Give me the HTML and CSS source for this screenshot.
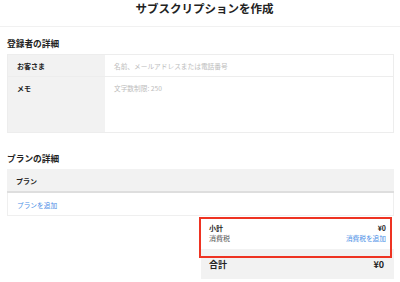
FILE: index.html
```html
<!DOCTYPE html>
<html>
  <head>
    <link rel="stylesheet" href="styles.css">
  </head>
  <body>
    <div class="top">
      <h1 class="title">サブスクリプションを作成</h1>
    </div>
    <div class="page">
      <h4 class="section">登録者の詳細</h4>
      <div class="details">
        <div class="row row-short">
          <div class="label">お客さま</div>
          <div class="value">名前、メールアドレスまたは電話番号</div>
        </div>
        <div class="row row-tall">
          <div class="label">メモ</div>
          <div class="value">文字数制限: 250</div>
        </div>
      </div>

      <h4 class="section section-gap">プランの詳細</h4>
      <div class="plans">
        <div class="plans-head">プラン</div>
        <div class="plans-row"><a href="#" class="link">プランを追加</a></div>
      </div>

      <div class="summary">
        <div class="summary-lines">
          <div class="line strong"><span>小計</span><span>¥0</span></div>
          <div class="line muted"><span>消費税</span><a href="#" class="link">消費税を追加</a></div>
        </div>
        <div class="total"><span>合計</span><span>¥0</span></div>
        <div class="highlight"></div>
      </div>
    </div>
  </body>
</html>
```

FILE: styles.css
```css
* {
  margin: 0;
  padding: 0;
  box-sizing: border-box;
}

body {
  font-family: "Noto Sans CJK JP", "Noto Sans", sans-serif;
  color: #222;
  background: #fff;
  width: 400px;
  overflow: hidden;
}

.top {
  height: 27px;
  border-bottom: 1px solid #f1f1f1;
}

.title {
  font-size: 11.5px;
  font-weight: bold;
  line-height: 17px;
  text-align: center;
  padding-left: 9px;
}

.page {
  padding: 0 6px 0 7px;
}

.section {
  font-size: 8.7px;
  font-weight: bold;
  line-height: 12px;
  padding: 11px 0 4px;
}

.section-gap {
  padding: 20px 0 4px;
}

.details {
  border: 1px solid #ededed;
}

.row {
  display: flex;
}

.row-short {
  height: 22px;
  border-bottom: 1px solid #ededed;
}

.row-tall {
  height: 55px;
}

.label {
  width: 97px;
  background: #f2f2f2;
  font-size: 7px;
  font-weight: bold;
  padding: 7px 0 0 9px;
  line-height: 9px;
}

.value {
  flex: 1;
  font-size: 6.7px;
  color: #bdbdbd;
  padding: 7px 0 0 9px;
  line-height: 9px;
}

.plans-head {
  height: 24px;
  background: #f2f2f2;
  border-bottom: 2px solid #dedede;
  font-size: 7px;
  font-weight: bold;
  line-height: 9px;
  padding: 8px 0 0 9px;
}

.plans-row {
  height: 23px;
  border: 1px solid #efefef;
  border-top: none;
  padding: 4px 0 0 9px;
  line-height: 9px;
}

.link {
  font-size: 6.7px;
  color: #4a8ee6;
  text-decoration: none;
}

.summary {
  position: relative;
  margin-left: 194px;
  margin-top: 1px;
}

.summary-lines {
  height: 32px;
  padding: 6px 8px 0 8px;
}

.line {
  display: flex;
  justify-content: space-between;
  font-size: 7px;
  line-height: 10px;
}

.strong {
  font-weight: bold;
}

.muted {
  color: #555;
}

.total {
  height: 30px;
  background: #f2f2f2;
  display: flex;
  justify-content: space-between;
  font-size: 9px;
  font-weight: bold;
  line-height: 12px;
  padding: 10px 10px 0 8px;
}

.highlight {
  position: absolute;
  left: -2px;
  top: 0;
  width: 193px;
  height: 41px;
  border: 2px solid #ee3322;
}
```
